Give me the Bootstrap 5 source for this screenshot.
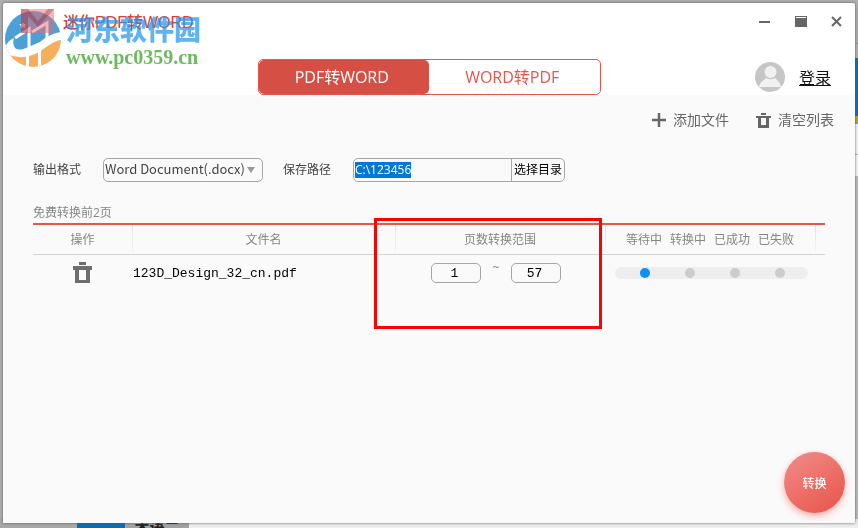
<!DOCTYPE html>
<html lang="zh-CN">
<head>
<meta charset="utf-8">
<meta name="viewport" content="width=device-width, initial-scale=1">
<title>迷你PDF转WORD</title>
<link href="https://cdn.jsdelivr.net/npm/bootstrap@5.3.0/dist/css/bootstrap.min.css" rel="stylesheet">
<style>
:root { --accent: #e8564b; --line: #a6a6a6; --soft: #858585; }
body { font-family: "Open Sans", "Noto Sans CJK SC", sans-serif; font-size: 12px; line-height: 16px; color: #444; background: #b0b0b0; overflow: hidden; }
.mono { font-family: "Liberation Mono", "Noto Sans CJK SC", monospace; font-size: 13px; color: #000; }

/* desktop behind the window */
.desk-right { width: 20px; z-index: -1; }
.desk-right .d-gray { height: 44px; background: #b0b0b0; border-bottom: 1px solid #999; }
.desk-right .d-band { height: 14px; background: #b4b4b4; }
.desk-right .d-blue { height: 58px; background: #0a6ebd; }
.desk-right .d-lime { height: 8px; background: #a5ae1c; }
.desk-right .d-white { height: 31px; background: #f7f7f7; border-bottom: 1px solid #bbb; }
.desk-right .d-white + .d-white { height: 22px; }
.desk-right .d-rest { background: #bcbcbc; }
.desk-bottom { height: 9px; z-index: -1; background: #eee; }
.desk-bottom .b-gray { width: 77px; background: #a8a8a8; }
.desk-bottom .b-blue { width: 48px; background: #0a6cb5; }
.desk-bottom .b-text { width: 64px; background: #a2a2a2; color: #222; font-size: 15px; font-weight: 700; }

.frame { padding: 3px 3px 5px; }
.app { background: #fafafa; border-radius: 3px 3px 0 0; box-shadow: 0 0 3px #555; }
.app-head { background: #fff; border-radius: 3px 3px 0 0; }
.title-row { height: 36px; padding-left: 18px; }
.app-logo { z-index: 4; opacity: .7; }
.app-title { font-family: "Liberation Sans", "Noto Sans CJK SC", sans-serif; font-size: 16px; color: #e23c34; padding: 3px 0 0 9px; }
.win-btn { width: 36px; height: 36px; color: #666; }
.plain { border: 0; background: none; padding: 0; color: #666; }
.tab-row { display: grid; grid-template-columns: 1fr 343px 1fr; margin-top: 20px; }
.tabs { height: 36px; border: 1px solid var(--accent); border-radius: 5px; }
.tabs button { font-size: 16px; color: var(--accent); border-radius: 5px; padding-right: 4px; }
.tabs button.active { background: #d64f44; color: #fff; }
.login { font-size: 16px; line-height: 20px; color: #111; padding-top: 2px; }
.account { padding-right: 24px; gap: 14px; }

.tools { height: 50px; padding-right: 21px; gap: 27px; }
.tools button { font-size: 14px; gap: 7px; }

.options { padding: 13px 30px 0; }
.opt-label { width: 70px; }
.box { height: 24px; border: 1px solid var(--line); border-radius: 5px; background: #fafafa; }
.fmt { width: 160px; margin-right: 20px; }
.fmt select { appearance: none; border: 0; background: none; color: #444; font-family: "Noto Sans CJK SC", sans-serif; font-size: 13px; line-height: 20px; padding: 0 0 2px 1px; outline: 0; }
.fmt::after { content: ""; position: absolute; right: 7px; top: 8px; border: 4px solid transparent; border-top: 6px solid #999; border-bottom: 0; }
.path { width: 212px; }
.path input { border: 0; outline: 0; background: none; padding: 0 0 0 1px; font-size: 12px; color: #222; min-width: 0; }
.path input::selection { background: #0078d7; color: #fff; }
.path button { width: 53px; border: 0; border-left: 1px solid var(--line); background: none; color: #000; padding: 0; font-size: 12px; }

.list { padding: 23px 30px 0; color: var(--soft); }
.files { table-layout: fixed; border-top: 2px solid var(--accent); color: var(--soft); margin-top: 2px; }
.files th { font-weight: 400; height: 30px; padding: 2px 0 0; text-align: center; border-bottom: 1px solid #d2d2d2; position: relative; }
.files th:not(:last-child)::before { content: ""; position: absolute; right: -1px; top: 0; width: 1px; height: 28px; background: linear-gradient(#e2e2e2, #f4f4f4); }
.files td { height: 38px; padding: 0; }
.c-op { width: 99px; } .c-mid { width: 210px; } .c-end { width: 10px; }
.trash { color: #6e6e6e; padding-top: 3px; }
.files .file-name { padding: 2px 0 0 1px; }
.page-in { width: 50px; height: 20px; border: 1px solid var(--line); border-radius: 5px; background: #fafafa; text-align: center; padding: 0 3px 0 0; outline: 0; }
.tilde { width: 30px; height: 20px; line-height: 10px; text-align: center; }
.steps { height: 12px; border-radius: 6px; background: #eee; gap: 35px; margin: 0 7px 0 10px; padding-left: 25px; }
.steps i { width: 10px; height: 10px; border-radius: 50%; background: #ccc; }
.steps i.on { background: #0a8ffb; }
.focus-box { left: -21px; right: 3px; top: -7px; height: 111px; border: 3px solid #f00; z-index: 2; }

.go { width: 61px; height: 61px; right: 10px; bottom: 10px; border: 0; border-radius: 50%; color: #fff; font-weight: 500; font-size: 12px; background: linear-gradient(145deg, #f28a86 5%, #e8594e 90%); box-shadow: 0 3px 7px #e8594e77; padding-top: 3px; }

.stamp { left: 1px; top: 7px; z-index: 3; pointer-events: none; }
.stamp-text { padding-left: 2px; }
.stamp-cn { font-family: "Noto Sans CJK SC", sans-serif; font-weight: 900; font-size: 27px; line-height: 32px; color: #2196ee; opacity: .72; padding-top: 3px; }
.stamp-url { font-family: "Liberation Serif", serif; font-weight: 700; font-size: 20px; line-height: 24px; color: #6dba5e; }
</style>
<script src="https://cdn.jsdelivr.net/npm/bootstrap@5.3.0/dist/js/bootstrap.bundle.min.js"></script>
</head>
<body>
<div class="desk-right position-fixed top-0 bottom-0 end-0 d-flex flex-column" aria-hidden="true">
  <div class="d-gray"></div><div class="d-band"></div><div class="d-blue"></div><div class="d-lime"></div>
  <div class="d-white"></div><div class="d-white"></div><div class="d-rest flex-fill"></div>
</div>
<div class="desk-bottom position-fixed bottom-0 start-0 end-0 d-flex overflow-hidden" aria-hidden="true">
  <div class="b-gray"></div><div class="b-blue"></div><div class="b-text text-center">术语二</div>
</div>

<div class="frame vh-100 d-flex">
<main class="app position-relative flex-fill d-flex flex-column">
  <header class="app-head">
    <div class="title-row d-flex align-items-center">
      <svg class="app-logo position-relative" width="33" height="24" viewBox="0 0 33 24" aria-hidden="true"><path fill="#f0666c" fill-opacity=".7" d="M0 0h33v24H0z"/><path fill="#b03848" fill-opacity=".8" d="M0 0h7l10 12L27 0h6L17 18 7 7v17H0z"/></svg>
      <h1 class="app-title m-0">迷你PDF转WORD</h1>
      <div class="ms-auto d-flex">
        <button class="plain win-btn" type="button" aria-label="最小化"><svg width="12" height="12"><path d="M0 6h11" stroke="currentColor" stroke-width="2"/></svg></button>
        <button class="plain win-btn" type="button" aria-label="最大化"><svg width="12" height="12"><path fill="currentColor" fill-rule="evenodd" d="M0 0h12v11H0zM1 1v1h10V1z"/></svg></button>
        <button class="plain win-btn" type="button" aria-label="关闭"><svg width="12" height="12"><path d="M1 1l9 9M10 1L1 10" stroke="currentColor" stroke-width="2"/></svg></button>
      </div>
    </div>
    <div class="tab-row align-items-center">
      <div></div>
      <div class="tabs d-flex">
        <button class="plain flex-fill w-50 active" type="button">PDF转WORD</button>
        <button class="plain flex-fill w-50" type="button">WORD转PDF</button>
      </div>
      <div class="account d-flex align-items-center justify-content-end">
        <svg width="30" height="30" viewBox="0 0 30 30" aria-hidden="true"><circle cx="15" cy="15" r="15" fill="#c6c6c6"/><circle cx="15.500" cy="10" r="6" fill="#f1f1f1"/><path fill="#f1f1f1" d="M4 25q1-5 6-8l1-1q4.500 2.500 9 0l1 1q4 3 5 8z"/></svg>
        <a class="login" href="#">登录</a>
      </div>
    </div>
  </header>

  <div class="tools d-flex align-items-center justify-content-end">
    <button class="plain d-flex align-items-center" type="button"><svg width="14" height="14"><path d="M7 0v14M0 7h14" stroke="currentColor" stroke-width="2.500"/></svg>添加文件</button>
    <button class="plain d-flex align-items-center" type="button"><svg width="15" height="15" viewBox="0 0 15 15"><path fill="currentColor" fill-rule="evenodd" d="M5 0h5v2H5zM0 3h15v2h-2v10H2V5H0zM5 5v7h5V5z"/></svg>清空列表</button>
  </div>

  <form class="options d-flex align-items-center" onsubmit="return false">
    <label class="opt-label" for="fmt">输出格式</label>
    <div class="box fmt position-relative d-flex">
      <select id="fmt" class="w-100"><option>Word Document(.docx)</option></select>
    </div>
    <label class="opt-label" for="path">保存路径</label>
    <div class="box path d-flex align-items-center">
      <input id="path" class="flex-fill" type="text" value="C:\123456">
      <button class="align-self-stretch" type="button">选择目录</button>
    </div>
  </form>

  <section class="list">
    <div>免费转换前2页</div>
    <table class="files w-100">
      <colgroup><col class="c-op"><col><col class="c-mid"><col class="c-mid"><col class="c-end"></colgroup>
      <thead>
        <tr>
          <th scope="col">操作</th><th scope="col">文件名</th>
          <th scope="col">页数转换范围<div class="focus-box position-absolute"></div></th>
          <th scope="col"><div class="d-flex justify-content-center gap-2"><span>等待中</span><span>转换中</span><span>已成功</span><span>已失败</span></div></th>
          <th></th>
        </tr>
      </thead>
      <tbody>
        <tr>
          <td class="text-center"><button class="plain trash" type="button" aria-label="删除"><svg class="d-block" width="19" height="21" viewBox="0 0 19 21"><path fill="currentColor" fill-rule="evenodd" d="M6 0h7v3H6zM0 4h19v4h-2v13H2V8H0zM6 8v10h7V8z"/></svg></button></td>
          <td class="mono file-name">123D_Design_32_cn.pdf</td>
          <td><div class="d-flex justify-content-center pe-2">
            <input class="page-in mono" type="text" value="1" aria-label="起始页"><span class="tilde">~</span><input class="page-in mono" type="text" value="57" aria-label="结束页">
          </div></td>
          <td><div class="steps d-flex align-items-center"><i class="on"></i><i></i><i></i><i></i></div></td>
          <td></td>
        </tr>
      </tbody>
    </table>
  </section>

  <button class="go position-absolute" type="button">转换</button>

  <div class="stamp position-absolute d-flex">
    <svg width="60" height="60" viewBox="0 0 60 60" aria-hidden="true">
      <defs><clipPath id="disc"><circle cx="29" cy="29" r="28"/></clipPath></defs>
      <g clip-path="url(#disc)">
        <path fill="#2b8fd0" fill-opacity=".85" d="M0 0h60v22Q46 24 36 33 18 48 0 42z"/>
        <path fill="#f6a74e" fill-opacity=".92" d="M3 44q18 8 35-4 12-9 18-10h4v30H0z"/>
        <path fill="#fff" d="M1 38Q3 31 10 28 8 34 11 38q4 3 11 0l14-6Q48 22 59 22v7Q50 29 36 39 18 50 0 43z"/>
        <path fill="none" stroke="#fff" stroke-width="3" d="M11 28l14-9v20M28 22l15-9v18"/>
        <path fill="#fff" d="M22 46l3-1v15h-3zM34 41l3-2v20h-3z"/>
        <path fill="#fff" d="M19 12l1 2h2l-1 2 1 2-3-1-2 1v-2l-2-2h3z"/>
      </g>
    </svg>
    <div class="stamp-text">
      <div class="stamp-cn">河东软件园</div>
      <div class="stamp-url">www.pc0359.cn</div>
    </div>
  </div>
</main>
</div>
<script>
const path = document.getElementById('path');
path.focus();
path.select();
</script>
</body>
</html>
